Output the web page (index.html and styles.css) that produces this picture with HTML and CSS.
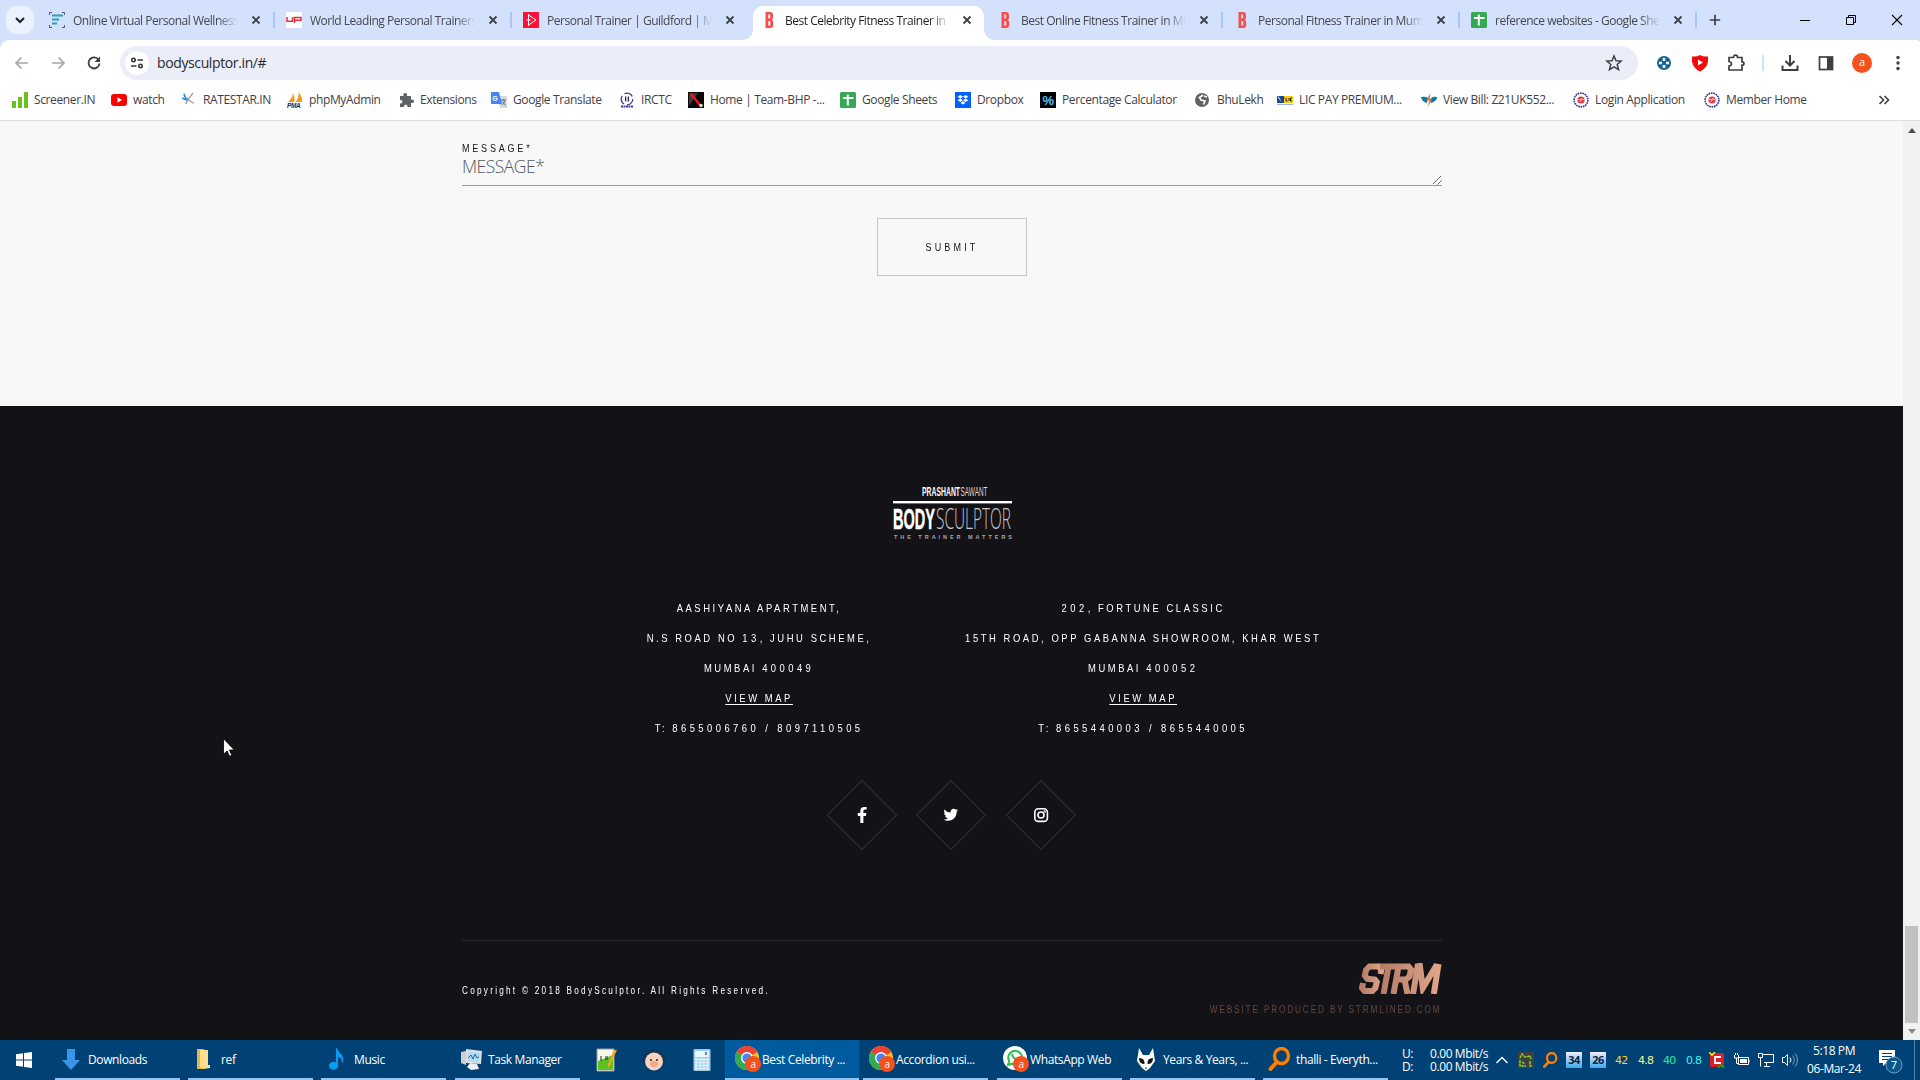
FILE: index.html
```html
<!DOCTYPE html>
<html lang="en">
<head>
<meta charset="utf-8">
<title>Best Celebrity Fitness Trainer in Mumbai</title>
<link rel="stylesheet" href="styles.css">
</head>
<body>
<svg class="defs" aria-hidden="true">
  <defs>
    <symbol id="x" viewBox="0 0 16 16"><path d="M4.500 4.500l7 7M11.500 4.500l-7 7" stroke="#3c4043" stroke-width="1.800" fill="none"/></symbol>
    <symbol id="b" viewBox="0 0 16 16"><path fill="#f4504b" fill-rule="evenodd" d="M4.500 0h4.500q3 0 3 3v2.500q0 1.800-1.300 2.300q1.500.6 1.500 2.700v2.500q0 3-3 3H4.500zM7.300 2.300v4.300h1q.9 0 .9-1V3.300q0-1-.9-1zM7.300 9v4.700h1q1 0 1-1V10q0-1-1-1z"/></symbol>
    <symbol id="sheets" viewBox="0 0 16 16"><rect width="16" height="16" rx="1.500" fill="#34a853"/><path d="M7.800 2.500v11M3 6h10.500" stroke="#fff" stroke-width="2"/></symbol>
    <symbol id="chrome" viewBox="0 0 26 26"><circle cx="12" cy="12" r="12" fill="#fbc116"/><path d="M12 12L1.600 6A12 12 0 0 1 22.400 6z" fill="#ea4335"/><path d="M12 12L1.600 6A12 12 0 0 0 12 24z" fill="#34a853"/><circle cx="12" cy="12" r="6" fill="#fff"/><circle cx="12" cy="12" r="4.600" fill="#4285f4"/><circle cx="18" cy="18" r="8" fill="#f4511e"/><text x="18" y="21.500" class="badge-a">a</text></symbol>
    <symbol id="lens" viewBox="0 0 24 24"><ellipse cx="14.500" cy="9" rx="7" ry="7.500" fill="none" stroke="#ff7e00" stroke-width="3.400"/><path d="M10 15l-6.500 7" stroke="#ff7e00" stroke-width="4" stroke-linecap="round"/></symbol>
    <symbol id="seal" viewBox="0 0 16 16"><circle cx="8" cy="8" r="6.900" fill="#fff" stroke="#1e2e8c" stroke-width="1.600" stroke-dasharray="1.600 .8"/><circle cx="8" cy="8" r="3.600" fill="#e63946"/><path d="M5 7.500h6M7 10l2-4" stroke="#f7b9b9"/></symbol>
  </defs>
</svg>

<div class="desktop">
  <header class="tabs">
    <div class="tab-search"><svg width="12" height="12" viewBox="0 0 12 12"><path d="M2 4l4 4 4-4" fill="none" stroke="#1f1f1f" stroke-width="2"/></svg></div>
    <div class="tab"><svg class="fav" viewBox="0 0 16 16"><path d="M3 3.500h11M3 7.500h7M3 11.500h5" stroke="#2c9cc0" stroke-width="2.200"/><path d="M3 .5H.5V3M13 .5h2.500V3M.5 13v2.500H3M13 15.500h2.500V13" fill="none" stroke="#555"/></svg><span>Online Virtual Personal Wellness Coach</span><svg class="close"><use href="#x"/></svg></div>
    <div class="tab"><svg class="fav" viewBox="0 0 16 16"><rect width="16" height="16" fill="#fff"/><path d="M1 5v4.300h5.500V5M8.500 11V5.500H15v2.800H8.500" fill="none" stroke="#e2303c" stroke-width="1.500"/></svg><span>World Leading Personal Trainers | UP</span><svg class="close"><use href="#x"/></svg></div>
    <div class="tab no-sep"><svg class="fav" viewBox="0 0 16 16"><rect width="16" height="16" fill="#fb1238"/><path d="M5.500 2v12M5.500 3l7.500 5-7.500 5M3.500 8h4" fill="none" stroke="#fff"/></svg><span>Personal Trainer | Guildford | Mobile PT</span><svg class="close"><use href="#x"/></svg></div>
    <div class="tab active"><svg class="fav"><use href="#b"/></svg><span>Best Celebrity Fitness Trainer in Mumbai</span><svg class="close"><use href="#x"/></svg></div>
    <div class="tab"><svg class="fav"><use href="#b"/></svg><span>Best Online Fitness Trainer in Mumbai</span><svg class="close"><use href="#x"/></svg></div>
    <div class="tab"><svg class="fav"><use href="#b"/></svg><span>Personal Fitness Trainer in Mumbai</span><svg class="close"><use href="#x"/></svg></div>
    <div class="tab"><svg class="fav"><use href="#sheets"/></svg><span>reference websites - Google Sheets</span><svg class="close"><use href="#x"/></svg></div>
    <svg class="new-tab" viewBox="0 0 12 12"><path d="M6 .8v10.400M.8 6h10.400" stroke="#3c4043" stroke-width="1.700"/></svg>
    <div class="window-buttons">
      <svg viewBox="0 0 12 12"><path d="M1 6.500h10" stroke="#000"/></svg>
      <svg viewBox="0 0 12 12"><path d="M1.500 3.500h7v7h-7zM3.500 3.500v-2h7v7h-2" fill="none" stroke="#000"/></svg>
      <svg viewBox="0 0 12 12"><path d="M1 1l10 10M11 1L1 11" stroke="#000" stroke-width="1.100"/></svg>
    </div>
  </header>

  <nav class="toolbar">
    <svg class="tool" viewBox="0 0 20 20"><path d="M16 10H4.500M9.500 4.500L4 10l5.500 5.500" fill="none" stroke="#a5a5a5" stroke-width="1.700"/></svg>
    <svg class="tool" viewBox="0 0 20 20"><path d="M4 10h11.500M10.500 4.500L16 10l-5.500 5.500" fill="none" stroke="#a5a5a5" stroke-width="1.700"/></svg>
    <svg class="tool" viewBox="0 0 20 20"><path d="M14.700 7A5.500 5.500 0 1 0 15.500 10.500" fill="none" stroke="#3c4043" stroke-width="1.900"/><path d="M16 3.500V9h-5.500z" fill="#3c4043"/></svg>
    <div class="address">
      <div class="site"><svg width="14" height="14" viewBox="0 0 14 14"><g fill="none" stroke="#333" stroke-width="1.600"><circle cx="3.500" cy="4" r="1.700"/><path d="M7.500 4H13M1 10h5.500"/><circle cx="10.500" cy="10" r="1.700"/></g></svg></div>
      <span>bodysculptor.in/#</span>
      <svg class="star" viewBox="0 0 18 18"><path d="M9 2l2 4.700 5.200.4-4 3.400 1.300 5.100L9 12.900l-4.500 2.700 1.300-5.100-4-3.400L7 6.700z" fill="none" stroke="#3c4043" stroke-width="1.500"/></svg>
    </div>
    <div class="tools">
      <svg class="tool" viewBox="0 0 20 20"><circle cx="10" cy="10" r="7" fill="#1c6591"/><path d="M10 5v3M10 12v3M5 10h3M12 10h3" stroke="#e6f5ff" stroke-width="2.600"/><path d="M10 8.500v3M8.500 10h3" stroke="#1c6591"/></svg>
      <svg class="tool" viewBox="0 0 20 20"><path d="M2 3.500Q7 4 10 2q3 2 8 1.500v5Q17 15 10 18.500Q3 15 2 8.500z" fill="#f50a0a"/><path d="M8 6.500v6l5-3z" fill="#fff"/></svg>
      <svg class="tool" viewBox="0 0 20 20"><path d="M3 4.500h4.500q0-2.300 2-2.300t2 2.300H16v4.300q2 0 2 1.700t-2 1.700V17H3v-4q2.500-.3 2.500-2.200T3 8.500z" fill="none" stroke="#3c4043" stroke-width="1.700"/></svg>
      <i></i>
      <svg class="tool" viewBox="0 0 20 20"><path d="M10 2v10M5.500 8l4.500 4.500L14.500 8M2.500 12.500V17h15v-4.500" fill="none" stroke="#3c4043" stroke-width="2"/></svg>
      <svg class="tool" viewBox="0 0 20 20"><rect x="3.500" y="4" width="13" height="12.500" fill="none" stroke="#3c4043" stroke-width="1.700"/><path d="M11 4h5.500v12.500H11z" fill="#3c4043"/></svg>
      <div class="avatar">a</div>
      <svg class="tool" viewBox="0 0 20 20"><g fill="#3c4043"><circle cx="10" cy="4.500" r="1.700"/><circle cx="10" cy="10" r="1.700"/><circle cx="10" cy="15.500" r="1.700"/></g></svg>
    </div>
  </nav>

  <nav class="bookmarks">
    <a><svg viewBox="0 0 16 16"><path d="M0 9h4v7H0zM6 5h4v11H6zM12 0h4v16h-4z" fill="#6cc11d"/></svg>Screener.IN</a>
    <a><svg viewBox="0 0 16 16"><rect y="2" width="16" height="12" rx="3" fill="#f00"/><path d="M6.500 5.300v5.400L11 8z" fill="#fff"/></svg>watch</a>
    <a><svg viewBox="0 0 16 16"><path d="M3 2l2 5M1 6l5 2 1-2" stroke="#2d8fd5" stroke-width="1.800" fill="none"/><path d="M12 1L7 7.500l6 4M4.500 12l2.500-4" stroke="#aaa" stroke-width="1.500" fill="none"/></svg>RATESTAR.IN</a>
    <a><svg viewBox="0 0 16 16"><path d="M1 10Q5 7 6 1q2 5 1.500 9zM8.500 10Q12 6 11.500 0q4 5 3.500 10z" fill="#f6971d"/><text x="0" y="16" class="pma">PMA</text></svg>phpMyAdmin</a>
    <a><svg viewBox="0 0 16 16"><path d="M2 4h3.500q-.7-3 1.700-3t1.800 3H13v3.500q3-.6 3 1.700t-3 1.800V15H9.500q.3-2.500-1.700-2.500T6 15H2v-3.500q2.500.2 2.500-1.800T2 8z" fill="#5f6368"/></svg>Extensions</a>
    <a><svg viewBox="0 0 16 16"><path d="M6 4h10v12H9z" fill="#d5d8dc"/><path d="M0 0h8l3 12H0z" fill="#4285f4"/><text x="1.300" y="8.500" class="gt">G</text><path d="M10 8h5M12.500 7v1.500M14 8.500q-1 3-3 4.500M11.500 9.500l3 4" stroke="#5f6f80" fill="none"/></svg>Google Translate</a>
    <a><svg viewBox="0 0 16 16"><circle cx="8" cy="7" r="5.800" fill="none" stroke="#3b3f98" stroke-width="1.300" stroke-dasharray="9 3"/><path d="M6 4.500v5h1.300v-5zM8.700 4.500v5H10v-5z" fill="#26277b"/><path d="M2 14.500h12" stroke="#3b3f98" stroke-width="2" stroke-dasharray="2 .5"/></svg>IRCTC</a>
    <a><svg viewBox="0 0 16 16"><rect width="16" height="16" fill="#080808"/><path d="M1 1h9L1 14z" fill="#3b3b3b"/><path d="M3 2l9 11" stroke="#f21515" stroke-width="2.500"/><circle cx="13" cy="13.500" r="1.800" fill="#ddd"/></svg>Home | Team-BHP -...</a>
    <a><svg><use href="#sheets"/></svg>Google Sheets</a>
    <a><svg viewBox="0 0 16 16"><rect width="16" height="16" fill="#0061fe"/><path d="M5.300 3L8 4.700 5.300 6.400 2.600 4.700zM10.700 3l2.700 1.700-2.700 1.700L8 4.700zM5.300 6.500L8 8.200 5.300 9.900 2.600 8.200zM10.700 6.500l2.700 1.700-2.700 1.700L8 8.200zM8 9.300l2.500 1.700L8 12.600 5.500 11z" fill="#fff"/></svg>Dropbox</a>
    <a><svg viewBox="0 0 16 16"><rect width="16" height="16" fill="#000"/><text x="8" y="13" class="pct">%</text></svg>Percentage Calculator</a>
    <a><svg viewBox="0 0 16 16"><circle cx="7" cy="8" r="7" fill="#5f6368"/><path d="M8 3L4.500 5.500 6 8l4 1-1.500 3.500M9 4l3 1" stroke="#fff" stroke-width="1.600" fill="none"/></svg>BhuLekh</a>
    <a><svg viewBox="0 0 16 16"><rect y="4" width="8" height="7" fill="#174a9c"/><rect x="7" y="4" width="9" height="7" fill="#fccb16"/><path d="M1 5.500l3 3 3-3M9 6v3h1.500M12 6v3M15 6h-1.500v3H15" stroke="#222" fill="none"/><path d="M1 4.500l2.500 4" stroke="#fff"/><path d="M0 12.500h16" stroke="#9eb3d8"/></svg>LIC PAY PREMIUM...</a>
    <a><svg viewBox="0 0 16 16"><path d="M0 5q5-1 7 1L6 11Q1 10 0 5zM9 7q3-3 7-2 0 4-6 6z" fill="#0b7c9f"/><path d="M9.500 1L5.500 8.500h3L6.500 15l5-8H8.500z" fill="#f0642d"/></svg>View Bill: Z21UK552...</a>
    <a><svg><use href="#seal"/></svg>Login Application</a>
    <a><svg><use href="#seal"/></svg>Member Home</a>
    <svg class="more" viewBox="0 0 12 12"><path d="M1.500 2l4 4-4 4M6.500 2l4 4-4 4" fill="none" stroke="#3c4043" stroke-width="1.600"/></svg>
  </nav>

  <div class="viewport">
    <main class="page">
      <section class="form">
        <label>MESSAGE*</label>
        <div class="field">MESSAGE*<svg viewBox="0 0 10 10"><path d="M1 9l8-8M5.500 9.500l4-4" stroke="#666"/></svg></div>
        <button><span>SUBMIT</span></button>
      </section>
      <footer>
        <svg class="logo" viewBox="0 0 120 56">
          <text x="29" y="10" class="logo-top" textLength="38" lengthAdjust="spacingAndGlyphs">PRASHANT</text>
          <text x="67.500" y="10" class="logo-top thin" textLength="27" lengthAdjust="spacingAndGlyphs">SAWANT</text>
          <rect y="15" width="119" height="2.400" fill="#fff"/>
          <text x="0" y="43" class="logo-bold" textLength="42" lengthAdjust="spacingAndGlyphs">BODY</text>
          <text x="43" y="43" class="logo-thin" textLength="75" lengthAdjust="spacingAndGlyphs">SCULPTOR</text>
          <text x="1" y="52.500" class="logo-tag" textLength="118">THE TRAINER MATTERS</text>
        </svg>
        <div class="addresses">
          <address>AASHIYANA APARTMENT,<br>N.S ROAD NO <span>13</span>, JUHU SCHEME,<br>MUMBAI <span>400049</span><br><a>VIEW MAP</a><br>T: <span>8655006760 / 8097110505</span></address>
          <address><span>202</span>, FORTUNE CLASSIC<br>15TH ROAD, OPP GABANNA SHOWROOM, KHAR WEST<br>MUMBAI <span>400052</span><br><a>VIEW MAP</a><br>T: <span>8655440003 / 8655440005</span></address>
        </div>
        <div class="social">
          <svg viewBox="0 0 72 72"><path d="M36 1.500L70.500 36 36 70.500 1.500 36z"/><path class="glyph" d="M34.300 44v-7h-2.500v-3h2.500v-2.200c0-2.500 1.500-3.900 3.800-3.900 1 0 2.500.2 2.500.2v2.500H39c-1.200 0-1.600.8-1.600 1.500V34h3l-.5 3h-2.500v7z"/></svg>
          <svg viewBox="0 0 72 72"><path d="M36 1.500L70.500 36 36 70.500 1.500 36z"/><path class="glyph" transform="translate(28.500 28.500) scale(.0285)" d="M459.400 151.700c.3 4.500.3 9.100.3 13.600 0 138.700-105.600 298.600-298.600 298.600-59.500 0-114.700-17.200-161.100-47.100 8.400 1 16.600 1.300 25.300 1.300 49.100 0 94.200-16.600 130.300-44.800-46.100-1-84.800-31.200-98.100-72.800 6.500 1 13 1.600 19.800 1.600 9.400 0 18.800-1.300 27.600-3.600-48.100-9.700-84.100-52-84.100-103v-1.300c14 7.800 30.200 12.700 47.400 13.300-28.300-18.800-46.800-51-46.800-87.400 0-19.500 5.200-37.400 14.300-53 51.700 63.700 129.300 105.300 216.400 109.800-1.600-7.800-2.600-15.900-2.600-24 0-57.800 46.800-104.900 104.900-104.900 30.200 0 57.500 12.700 76.700 33.100 23.700-4.500 46.500-13.300 66.600-25.300-7.800 24.400-24.400 44.800-46.100 57.800 21.100-2.300 41.600-8.100 60.400-16.200-14.300 20.800-32.200 39.300-52.600 54.300z"/></svg>
          <svg viewBox="0 0 72 72"><path d="M36 1.500L70.500 36 36 70.500 1.500 36z"/><g class="insta"><rect x="29.800" y="29.800" width="12.600" height="12.600" rx="3.500"/><circle cx="36" cy="36" r="3"/><circle cx="39.700" cy="32.400" r=".4"/></g></svg>
        </div>
        <div class="legal">
          <p>Copyright © 2018 BodySculptor. All Rights Reserved.</p>
          <div class="producer">
            <svg class="strm" viewBox="0 0 84 31"><defs><linearGradient id="copper"><stop stop-color="#b57c68"/><stop offset="1" stop-color="#dfa488"/></linearGradient></defs><g fill="none" stroke="url(#copper)" stroke-width="6"><path d="M22.500 11l.8-4L21 3.500h-9.500L8 7 6.800 12.500l2.500 3.300 7.500.7 2 2.500-1.500 6-3 3H6.500L4 25l1-5"/><path d="M22 3.500h16M30.500 3.500L25.500 31M35.500 31l5-27.500h10l2.500 3-1.500 7-3.500 3h-9M46.500 16.500L49.500 31M55 31L60 1M61.500 0l3.300 25L79 1.500M80.500 1l-4.700 30"/></g></svg>
            <p>WEBSITE PRODUCED BY STRMLINED.COM</p>
          </div>
        </div>
      </footer>
    </main>
    <aside class="scrollbar">
      <svg viewBox="0 0 8 5"><path d="M0 5l4-5 4 5z" fill="#505050"/></svg>
      <div class="thumb"></div>
      <svg viewBox="0 0 8 5"><path d="M0 0l4 5 4-5z" fill="#8a8a8a"/></svg>
    </aside>
  </div>

  <div class="taskbar">
    <div class="start"><svg width="16" height="16" viewBox="0 0 16 16"><path d="M0 2.200L7 1.200v6.300H0zM8 1L16 0v7.500H8zM0 8.500h7v6.300L0 13.800zM8 8.500h8V16l-8-1.100z" fill="#fff"/></svg></div>
    <div class="task"><svg viewBox="0 0 24 24"><path d="M8 2h8v11h5l-9 10-9-10h5z" fill="#3895e8"/></svg>Downloads</div>
    <div class="task"><svg viewBox="0 0 24 24"><path d="M5 2h7v20H5z" fill="#e8b84c"/><path d="M8 3h8v15h2v3l-7 1-3-2z" fill="#ffdf8e"/></svg>ref</div>
    <div class="task"><svg viewBox="0 0 24 24"><path d="M12 1c1 5 8 7 6 14l-1 1c0-4-2-6-4-6v9a4.500 4 0 1 1-2-3.500V1z" fill="#0a9cf5"/></svg>Music</div>
    <div class="task"><svg viewBox="0 0 24 24"><path d="M2 5l5-1v14l-5-2z" fill="#cfcfcb"/><path d="M7 2l16 2-1 13-15-1z" fill="#ddd"/><path d="M9 4.500l12 1.500-1 9-11-1z" fill="#aedaf6"/><path d="M9 11l3-3 2 4 2-5 2 4 2-1" fill="none" stroke="#26699b"/><path d="M11 16l7 1 2 5-8 1-4-3z" fill="#eee"/></svg>Task Manager</div>
    <div class="pin"><svg viewBox="0 0 24 24"><path d="M2 1h17v22H2z" fill="#f7f7e8" stroke="#999"/><path d="M3 13l15-6v15H3z" fill="#58c322"/><path d="M6 8v5M10 9h3M10 11h3" stroke="#222"/><path d="M22 2l-7 15-2 3v-4l6-14z" fill="#f5a524"/></svg></div>
    <div class="pin"><svg viewBox="0 0 24 24"><path d="M1 15V9q3-8 11-8t11 8v6z" fill="#12345c"/><circle cx="12" cy="13.500" r="9" fill="#fbd2bb"/><circle cx="9" cy="12" r="1" fill="#222"/><circle cx="15" cy="12" r="1" fill="#222"/><ellipse cx="12" cy="16" rx="4" ry="3" fill="#f1a88f"/></svg></div>
    <div class="pin"><svg viewBox="0 0 24 24"><rect x="3.500" y="1" width="17" height="22" rx="1" fill="#9bcdea"/><path d="M5 3h14v6H5z" fill="#e9f7fe"/><path d="M5 11.500h14M5 14.500h14M5 17.500h14M5 20.500h14" stroke="#eef9ff" stroke-width="2" stroke-dasharray="3 .7"/><path d="M15 4v3h2V4z" fill="#4f8fba"/></svg></div>
    <div class="task app current"><svg><use href="#chrome"/></svg>Best Celebrity ...</div>
    <div class="task app"><svg><use href="#chrome"/></svg>Accordion usi...</div>
    <div class="task app"><svg viewBox="0 0 26 26"><circle cx="12" cy="12" r="12" fill="#fff"/><path d="M5 19l1.200-4A6.800 6.800 0 1 1 9 17.700z" fill="none" stroke="#2dbd55" stroke-width="2"/><path d="M9 8q1 5 6 6" fill="none" stroke="#2dbd55" stroke-width="2"/><circle cx="18" cy="18" r="8" fill="#f4511e"/><text x="18" y="21.500" class="badge-a">a</text></svg>WhatsApp Web</div>
    <div class="task"><svg viewBox="0 0 24 24"><path d="M5 1l4 7h6l4-7 2 13-5 7-4 3-4-3-5-7z" fill="#fff"/><path d="M5 11q6 0 5.500 6Q5 17 5 11zM19 11q-6 0-5.500 6Q19 17 19 11z" fill="#111"/><path d="M11 21h2" stroke="#222"/></svg>Years &amp; Years, ...</div>
    <div class="task"><svg><use href="#lens"/></svg>thalli - Everyth...</div>
    <div class="net"><span>U:</span><span>0.00 Mbit/s</span><span>D:</span><span>0.00 Mbit/s</span></div>
    <div class="tray">
      <svg viewBox="0 0 16 16"><path d="M2.500 11L8 5.500l5.500 5.500" fill="none" stroke="#fff" stroke-width="1.400"/></svg>
      <svg viewBox="0 0 16 16"><rect width="16" height="16" fill="#3e4040"/><path d="M2 6l2-4 3 3 5-1 1 3M2 8v6h6M4 10l3 2M12 9v5h2" fill="none" stroke="#84d52f" stroke-width="1.400" stroke-dasharray="3 .6"/></svg>
      <svg><use href="#lens"/></svg>
      <b class="temp">34</b><b class="temp">26</b>
      <span class="c1">42</span><span class="c2">4.8</span><span class="c3">40</span><span class="c4">0.8</span>
      <svg viewBox="0 0 16 16"><rect x="1" y="1" width="14" height="14" rx="1.500" fill="#d81f2a"/><path d="M11 6V5H6v6h5v-1" fill="none" stroke="#fff" stroke-width="1.800"/><path d="M0 0l3 3 3-3" fill="none" stroke="#ffe600" stroke-width="1.600"/><path d="M9 16l3-3 3 3" fill="none" stroke="#11a31a" stroke-width="2"/></svg>
      <svg viewBox="0 0 16 16"><path d="M4.500 5.500h10v7h-10zM15 7.500v3" fill="none" stroke="#fff"/><path d="M6 7h7v4H6z" fill="#fff"/><path d="M.5 3v3h4V3M2.500 6v5.500h2M1.500 3V1M3.500 3V1" fill="none" stroke="#fff"/></svg>
      <svg viewBox="0 0 16 16"><path d="M4.500 2.500h11v8H6M8.500 10.500v4M6 14.500h6M.5 1.500h4v4h-4zM2.500 5.500v9" fill="none" stroke="#fff"/></svg>
      <svg viewBox="0 0 16 16"><path d="M.5 5.500h2l3-3v11l-3-3h-2zM8 5.500q2 2.500 0 5" fill="none" stroke="#fff"/><path d="M10.500 3.500q3.500 4.500 0 9M13 1.500q5 6.500 0 13" fill="none" stroke="#7d9fba"/></svg>
    </div>
    <div class="clock">5:18 PM<br>06-Mar-24</div>
    <div class="notice"><svg width="26" height="26" viewBox="0 0 26 26"><path d="M0 1h16v13H7l-3 3v-3H0z" fill="#fff"/><path d="M3 4.500h10M3 7.500h10M3 10.500h6" stroke="#004275"/><circle cx="15" cy="16" r="8" fill="#0b568b" stroke="#6d9fc4"/><text x="15" y="20" class="count">7</text></svg></div>
  </div>

  <svg class="cursor" viewBox="0 0 12 19"><path d="M.5.700v15.500l3.600-3.300 2.400 5.400 2.300-1-2.400-5.300h4.900z" fill="#fff" stroke="#000" stroke-width=".8"/></svg>
</div>
</body>
</html>
```
FILE: styles.css
```css
* { box-sizing: border-box; }
body { margin: 0; font-family: "Open Sans", "Noto Sans", sans-serif; font-size: 12px; overflow: hidden; }
svg { display: block; flex: none; }
.defs { position: absolute; width: 0; height: 0; }
.desktop { position: relative; width: 1920px; height: 1080px; display: grid; grid-template-rows: 40px 46px 35px 919px 40px; background: #d3e1fd; }

/* Tab strip */
.tabs { display: flex; align-items: center; padding-left: 6px; color: #45484c; }
.tab-search { width: 28px; height: 28px; margin-right: 4px; border-radius: 10px; background: #ebf1fe; display: grid; place-items: center; }
.tab { position: relative; width: 237px; height: 34px; margin-top: 6px; padding: 0 0 6px 11px; display: flex; align-items: center; }
.tab::after { content: ""; position: absolute; right: 0; top: 6px; width: 2px; height: 16px; background: #a8c7fa; }
.tab.no-sep::after, .tab.active::after { display: none; }
.tab span { width: 165px; margin-left: 8px; overflow: hidden; white-space: nowrap; letter-spacing: -.48px; -webkit-mask-image: linear-gradient(90deg, #000 88%, transparent); mask-image: linear-gradient(90deg, #000 88%, transparent); }
.fav { width: 16px; height: 16px; }
.close { width: 16px; height: 16px; margin-left: 10px; }
.tab.active { color: #1f1f1f; background: #fff; width: 231px; margin-left: 4px; margin-right: 2px; padding-left: 8px; border-radius: 10px 10px 0 0; }
.tab.active .close { margin-left: 9px; }
.tab.active::before { content: ""; position: absolute; left: -10px; right: -10px; bottom: 0; height: 10px; background: radial-gradient(circle at 0 0, transparent 9.500px, #fff 10px) 0 0 / 10px 10px no-repeat, radial-gradient(circle at 100% 0, transparent 9.500px, #fff 10px) 100% 0 / 10px 10px no-repeat; }
.new-tab { width: 12px; height: 12px; margin-left: 12px; }
.window-buttons { display: flex; gap: 34px; margin-left: 78px; }
.window-buttons svg { width: 12px; height: 12px; }

/* Address row */
.toolbar { background: #fff; border-radius: 9px 9px 0 0; display: flex; align-items: center; padding: 0 0 1px 12px; }
.tool { width: 20px; height: 20px; margin-right: 16px; }
.address { width: 1518px; height: 34px; border-radius: 17px; background: #ebeef8; display: flex; align-items: center; padding: 0 15px 0 5px; font-size: 14px; color: #2a2b2e; letter-spacing: -.38px; }
.site { width: 24px; height: 24px; border-radius: 50%; background: #fff; display: grid; place-items: center; margin-right: 8px; }
.star { width: 18px; height: 18px; margin-left: auto; }
.tools { display: flex; align-items: center; margin-left: 16px; }
.tools i { width: 2px; height: 16px; background: #d3e1fd; margin-right: 16px; }
.avatar { width: 20px; height: 20px; border-radius: 50%; margin-right: 16px; background: #f4511e; color: #fff; font-size: 11px; line-height: 18px; text-align: center; }

/* Bookmarks */
.bookmarks { background: #fff; border-bottom: 1px solid #dedede; display: grid; align-items: center; padding: 0 0 7px 12px; color: #3f4145; grid-template-columns: 99px 70px 106px 111px 93px 128px 69px 152px 115px 85px 155px 82px 144px 152px 131px 174px 12px; }
.bookmarks a { display: flex; align-items: center; gap: 6px; white-space: nowrap; letter-spacing: -.37px; }
.bookmarks a svg { width: 16px; height: 16px; }
.bookmarks .more { width: 12px; height: 12px; }
.pma { font: italic bold 6.500px "Liberation Sans", sans-serif; fill: #1c1c66; }
.gt { font: bold 7px "Liberation Sans", sans-serif; fill: #fff; }
.pct { font: bold 13px "Liberation Sans", sans-serif; fill: #4fc3ff; text-anchor: middle; }

/* Web page: wide sans condensed horizontally for labels and footer copy */
.viewport { display: grid; grid-template-columns: 1903px 17px; }
.page { background: #131217; font-family: "Liberation Sans", Arial, sans-serif; }
.form { height: 285px; padding: 20px 461px 0 462px; background: #f8f8f8; display: flex; flex-direction: column; }
.form label { font-size: 11px; line-height: 14px; letter-spacing: 3.400px; color: #131217; align-self: flex-start; transform: scaleX(.82); transform-origin: left; }
.field { height: 31px; border-bottom: 1px solid #999; display: flex; justify-content: space-between; font: 300 17.500px/23px "Open Sans", sans-serif; letter-spacing: -.5px; color: #4f5962; }
.field svg { width: 10px; height: 10px; align-self: flex-end; }
.form button { align-self: center; width: 150px; height: 58px; margin-top: 32px; padding: 0; border: 1px solid #c6c6c6; background: transparent; font: 11px "Liberation Sans", Arial, sans-serif; letter-spacing: 3.800px; color: #131217; }
.form button span { display: block; transform: scaleX(.82); }
footer { padding: 80px 461px 0 462px; display: flex; flex-direction: column; align-items: center; color: #fff; }
.logo { width: 120px; height: 56px; margin-left: 2px; overflow: visible; }
.logo text { fill: #fff; }
.logo .logo-top { font-size: 12.500px; font-weight: bold; }
.logo .logo-top.thin { font-weight: normal; fill: #ddd; }
.logo .logo-bold { font-size: 30px; font-weight: bold; stroke: #fff; stroke-width: .5px; }
.logo .logo-thin { font: 300 30px "Open Sans", sans-serif; fill: #c8c8c8; }
.logo .logo-tag { font: bold 5.500px "Liberation Sans", sans-serif; fill: #aaa; }
.addresses { display: grid; grid-template-columns: 384px 384px; justify-items: center; margin-top: 51px; margin-left: -1px; }
address { width: max-content; font-style: normal; font-size: 11.500px; line-height: 30px; letter-spacing: 3.120px; text-align: center; white-space: nowrap; transform: scaleX(.82); }
address span { letter-spacing: 4.200px; }
address a { text-decoration: underline; text-underline-offset: 2px; }
.social { display: flex; gap: 17.500px; margin-top: 36px; margin-left: -2px; }
.social svg { width: 72px; height: 72px; fill: none; stroke: #2a2a2f; stroke-width: 1.300; }
.social .glyph { fill: #fff; stroke: none; }
.social .insta { stroke: #fff; stroke-width: 1.600; }
.legal { width: 980px; margin-top: 89px; border-top: 1px solid #2b2a2f; display: flex; justify-content: space-between; }
.legal p { margin: 0; white-space: nowrap; transform: scaleX(.82); transform-origin: left; }
.legal > p { margin-top: 43px; font-size: 10px; line-height: 14px; letter-spacing: 2.750px; }
.producer { display: flex; flex-direction: column; align-items: flex-end; margin-top: 22px; }
.strm { width: 84px; height: 31px; }
.producer .strm + p { margin-top: 9px; font-size: 10px; line-height: 14px; letter-spacing: 2.270px; color: #62493f; transform-origin: right; }
.scrollbar { background: #f1f1f1; display: flex; flex-direction: column; align-items: center; padding: 7px 0 6px; }
.scrollbar svg { width: 8px; height: 5px; }
.thumb { width: 13px; height: 97px; background: #c1c1c1; margin-top: auto; margin-bottom: 6px; }

/* Taskbar */
.taskbar { background: #004275; color: #fff; display: grid; grid-template-columns: 55px 133px 133px 134px 129px 46px 48px 47px 138px 134px 133px 133px 139px 92px 307px 68px 51px; }
.start, .pin { display: grid; place-items: center; }
.start { padding-right: 7px; }
.pin svg { width: 24px; height: 24px; }
.task { width: 125px; display: flex; align-items: center; gap: 5px; padding: 0 0 0 4px; border-bottom: 2px solid #92c5f3; white-space: nowrap; letter-spacing: -.38px; }
.task svg { width: 24px; height: 24px; }
.task.app { padding-left: 6px; gap: 1px; }
.task.app svg { width: 26px; height: 26px; }
.task.current { width: 134px; background: #005a9e; padding-left: 10px; }
.badge-a { font: 10px "Open Sans", sans-serif; fill: #fff; text-anchor: middle; }
.net { display: grid; grid-template-columns: 28px 1fr; align-content: center; line-height: 13px; white-space: nowrap; letter-spacing: -.4px; }
.tray { display: grid; align-items: center; grid-template-columns: repeat(5, 24px) 23px 25px 23px 24px 25px repeat(3, 24px); }
.tray svg { width: 16px; height: 16px; }
.temp { width: 16px; height: 16px; background: linear-gradient(#f0eeff, #3aaaf2); color: #12233a; font-size: 11px; line-height: 16px; text-align: center; letter-spacing: -.5px; }
.tray span { font: 11px "DejaVu Sans", sans-serif; letter-spacing: -.8px; padding-left: 1px; }
.c1 { color: #ffd21c; } .c2 { color: #fff68a; } .c3 { color: #19f0a0; } .c4 { color: #3af5ea; }
.clock { text-align: center; line-height: 18px; padding-top: 2px; padding-right: 2px; letter-spacing: -.4px; }
.notice { display: flex; align-items: center; padding: 4px 0 0 10px; border-right: 1px solid #5582a4; width: 46px; }
.count { font: 11px "Open Sans", sans-serif; fill: #fff; text-anchor: middle; }
.cursor { position: absolute; left: 223px; top: 738px; width: 12px; height: 19px; }
```
